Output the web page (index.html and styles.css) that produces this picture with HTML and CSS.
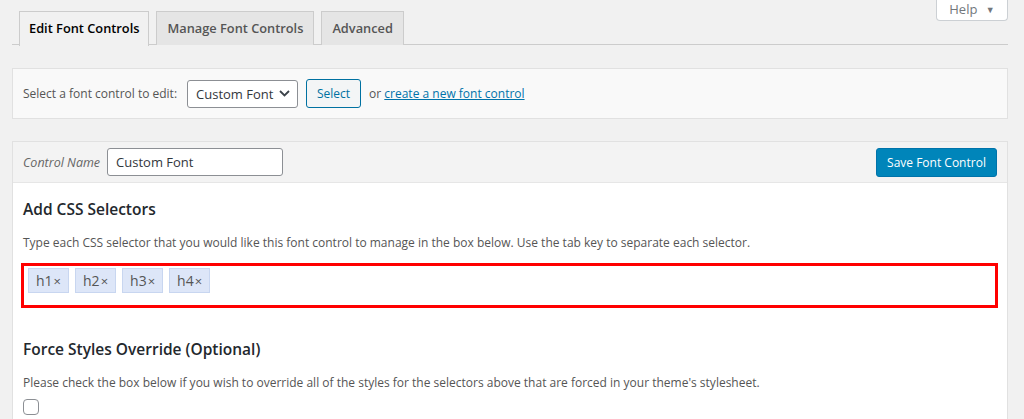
FILE: index.html
```html
<!DOCTYPE html>
<html lang="en">
<head>
<meta charset="utf-8">
<title>Edit Font Controls</title>
<link rel="stylesheet" href="styles.css">
</head>
<body>
<div class="wrap">
  <div class="help-row">
    <button class="help-btn">Help <span class="caret">&#9660;</span></button>
  </div>
  <nav class="tabs">
    <a class="tab active">Edit Font Controls</a>
    <a class="tab">Manage Font Controls</a>
    <a class="tab">Advanced</a>
  </nav>

  <div class="picker">
    <label class="picker-label">Select a font control to edit:</label>
    <div class="select"><span>Custom Font</span>
      <svg class="chev" width="11" height="7" viewBox="0 0 11 7"><path d="M1 1 L5.5 5.5 L10 1" fill="none" stroke="#3c434a" stroke-width="1.8"/></svg>
    </div>
    <button class="btn-secondary">Select</button>
    <span class="or">or <a class="link">create a new font control</a></span>
  </div>

  <div class="panel">
    <div class="panel-head">
      <label class="cn-label">Control Name</label>
      <div class="text-input">Custom Font</div>
      <span class="spacer"></span>
      <button class="btn-primary">Save Font Control</button>
    </div>
    <div class="panel-body">
      <h3 class="section-title">Add CSS Selectors</h3>
      <p class="desc">Type each CSS selector that you would like this font control to manage in the box below. Use the tab key to separate each selector.</p>
      <div class="tag-box">
        <span class="tag">h1<span class="x">×</span></span>
        <span class="tag">h2<span class="x">×</span></span>
        <span class="tag">h3<span class="x">×</span></span>
        <span class="tag">h4<span class="x">×</span></span>
      </div>
      <h3 class="section-title second">Force Styles Override (Optional)</h3>
      <p class="desc">Please check the box below if you wish to override all of the styles for the selectors above that are forced in your theme's stylesheet.</p>
      <span class="checkbox"></span>
    </div>
  </div>
</div>
</body>
</html>
```

FILE: styles.css
```css
* { box-sizing: border-box; }
html, body { margin: 0; padding: 0; }
body {
  background: #f1f1f1;
  font-family: "Open Sans", "Noto Sans", sans-serif;
  color: #444;
  font-size: 12px;
  overflow: hidden;
}
.wrap {
  padding: 0 16px 0 12px;
  width: 1024px;
}
.help-row {
  height: 0;
  position: relative;
}
.help-btn {
  position: absolute;
  right: 0;
  top: 0;
  width: 72px;
  height: 21px;
  background: #fff;
  border: 1px solid #ccd0d4;
  border-top: none;
  border-radius: 0 0 4px 4px;
  font-family: inherit;
  font-size: 13px;
  color: #72777c;
  padding: 0 0 2px 0;
  line-height: 18px;
}
.help-btn .caret { font-size: 9px; margin-left: 5px; position: relative; top: -1px; }
.tabs {
  display: flex;
  gap: 7px;
  padding: 11px 0 0 7px;
  border-bottom: 1px solid #ccc;
  height: 45px;
}
.tab {
  display: block;
  height: 34px;
  padding: 0 10px;
  line-height: 32px;
  font-size: 12.8px;
  font-weight: 600;
  border: 1px solid #ccc;
  border-bottom: none;
  background: #e5e5e5;
  color: #555;
  margin-bottom: -1px;
}
.tab.active {
  background: #f1f1f1;
  color: #000;
  height: 35px;
  padding: 0 9px;
}
.picker {
  margin-top: 23px;
  height: 51px;
  background: #f9f9f9;
  border: 1px solid #e1e1e1;
  display: flex;
  align-items: center;
  padding: 0 10px;
}
.picker-label { color: #555; font-size: 12px; margin-right: 10px; }
.select {
  width: 111px;
  height: 28px;
  border: 1px solid #8c8f94;
  border-radius: 3px;
  background: #fff;
  display: flex;
  align-items: center;
  padding: 0 7px 0 8px;
  font-size: 13px;
  color: #32373c;
  white-space: nowrap;
}
.chev { margin-left: auto; }
.btn-secondary {
  margin-left: 8px;
  height: 29px;
  width: 55px;
  padding: 0;
  border: 1px solid #0071a1;
  border-radius: 3px;
  background: #f3f5f6;
  color: #0071a1;
  font-family: inherit;
  font-size: 12px;
}
.or { margin-left: 8px; color: #555; }
.link { color: #0073aa; text-decoration: underline; }
.panel {
  margin-top: 22px;
  background: #fff;
  border: 1px solid #e1e1e1;
}
.panel-head {
  display: flex;
  align-items: center;
  height: 41px;
  background: #f3f3f3;
  border-bottom: 1px solid #e6e6e6;
  padding: 0 10px 0 10px;
}
.cn-label { font-style: italic; color: #666; font-size: 12.5px; margin-right: 7px; }
.text-input {
  width: 176px;
  height: 28px;
  border: 1px solid #8c8f94;
  border-radius: 3px;
  background: #fff;
  font-size: 13px;
  color: #32373c;
  padding: 0 8px;
  line-height: 26px;
}
.spacer { flex: 1; }
.btn-primary {
  height: 29px;
  width: 121px;
  padding: 0;
  background: #0085ba;
  border: 1px solid #0073aa;
  border-radius: 3px;
  color: #fff;
  font-family: inherit;
  font-size: 12px;
}
.panel-body { padding: 14px 10px 4px 10px; }
.section-title {
  margin: 0;
  font-size: 15.5px;
  font-weight: 600;
  color: #23282d;
  line-height: 24px;
}
.second { margin-top: 29px; }
.desc { margin: 12px 0 0 0; font-size: 12px; color: #555; line-height: 20px; }
.tag-box {
  margin: 10px -1px 0 -2px;
  height: 45px;
  border: 3px solid #ff0000;
  display: flex;
  align-items: flex-start;
  gap: 6px;
  padding: 2px 4px;
}
.tag {
  display: inline-flex;
  align-items: center;
  height: 25px;
  padding: 0 7px;
  background: #dde6f8;
  border: 1px solid #c8d6f0;
  color: #555;
  font-size: 14px;
}
.tag .x { font-size: 13px; margin-left: 1px; }
.checkbox {
  display: block;
  margin-top: 6px;
  width: 16px;
  height: 16px;
  border: 1px solid #8c8f94;
  border-radius: 4px;
  background: #fff;
}
```
